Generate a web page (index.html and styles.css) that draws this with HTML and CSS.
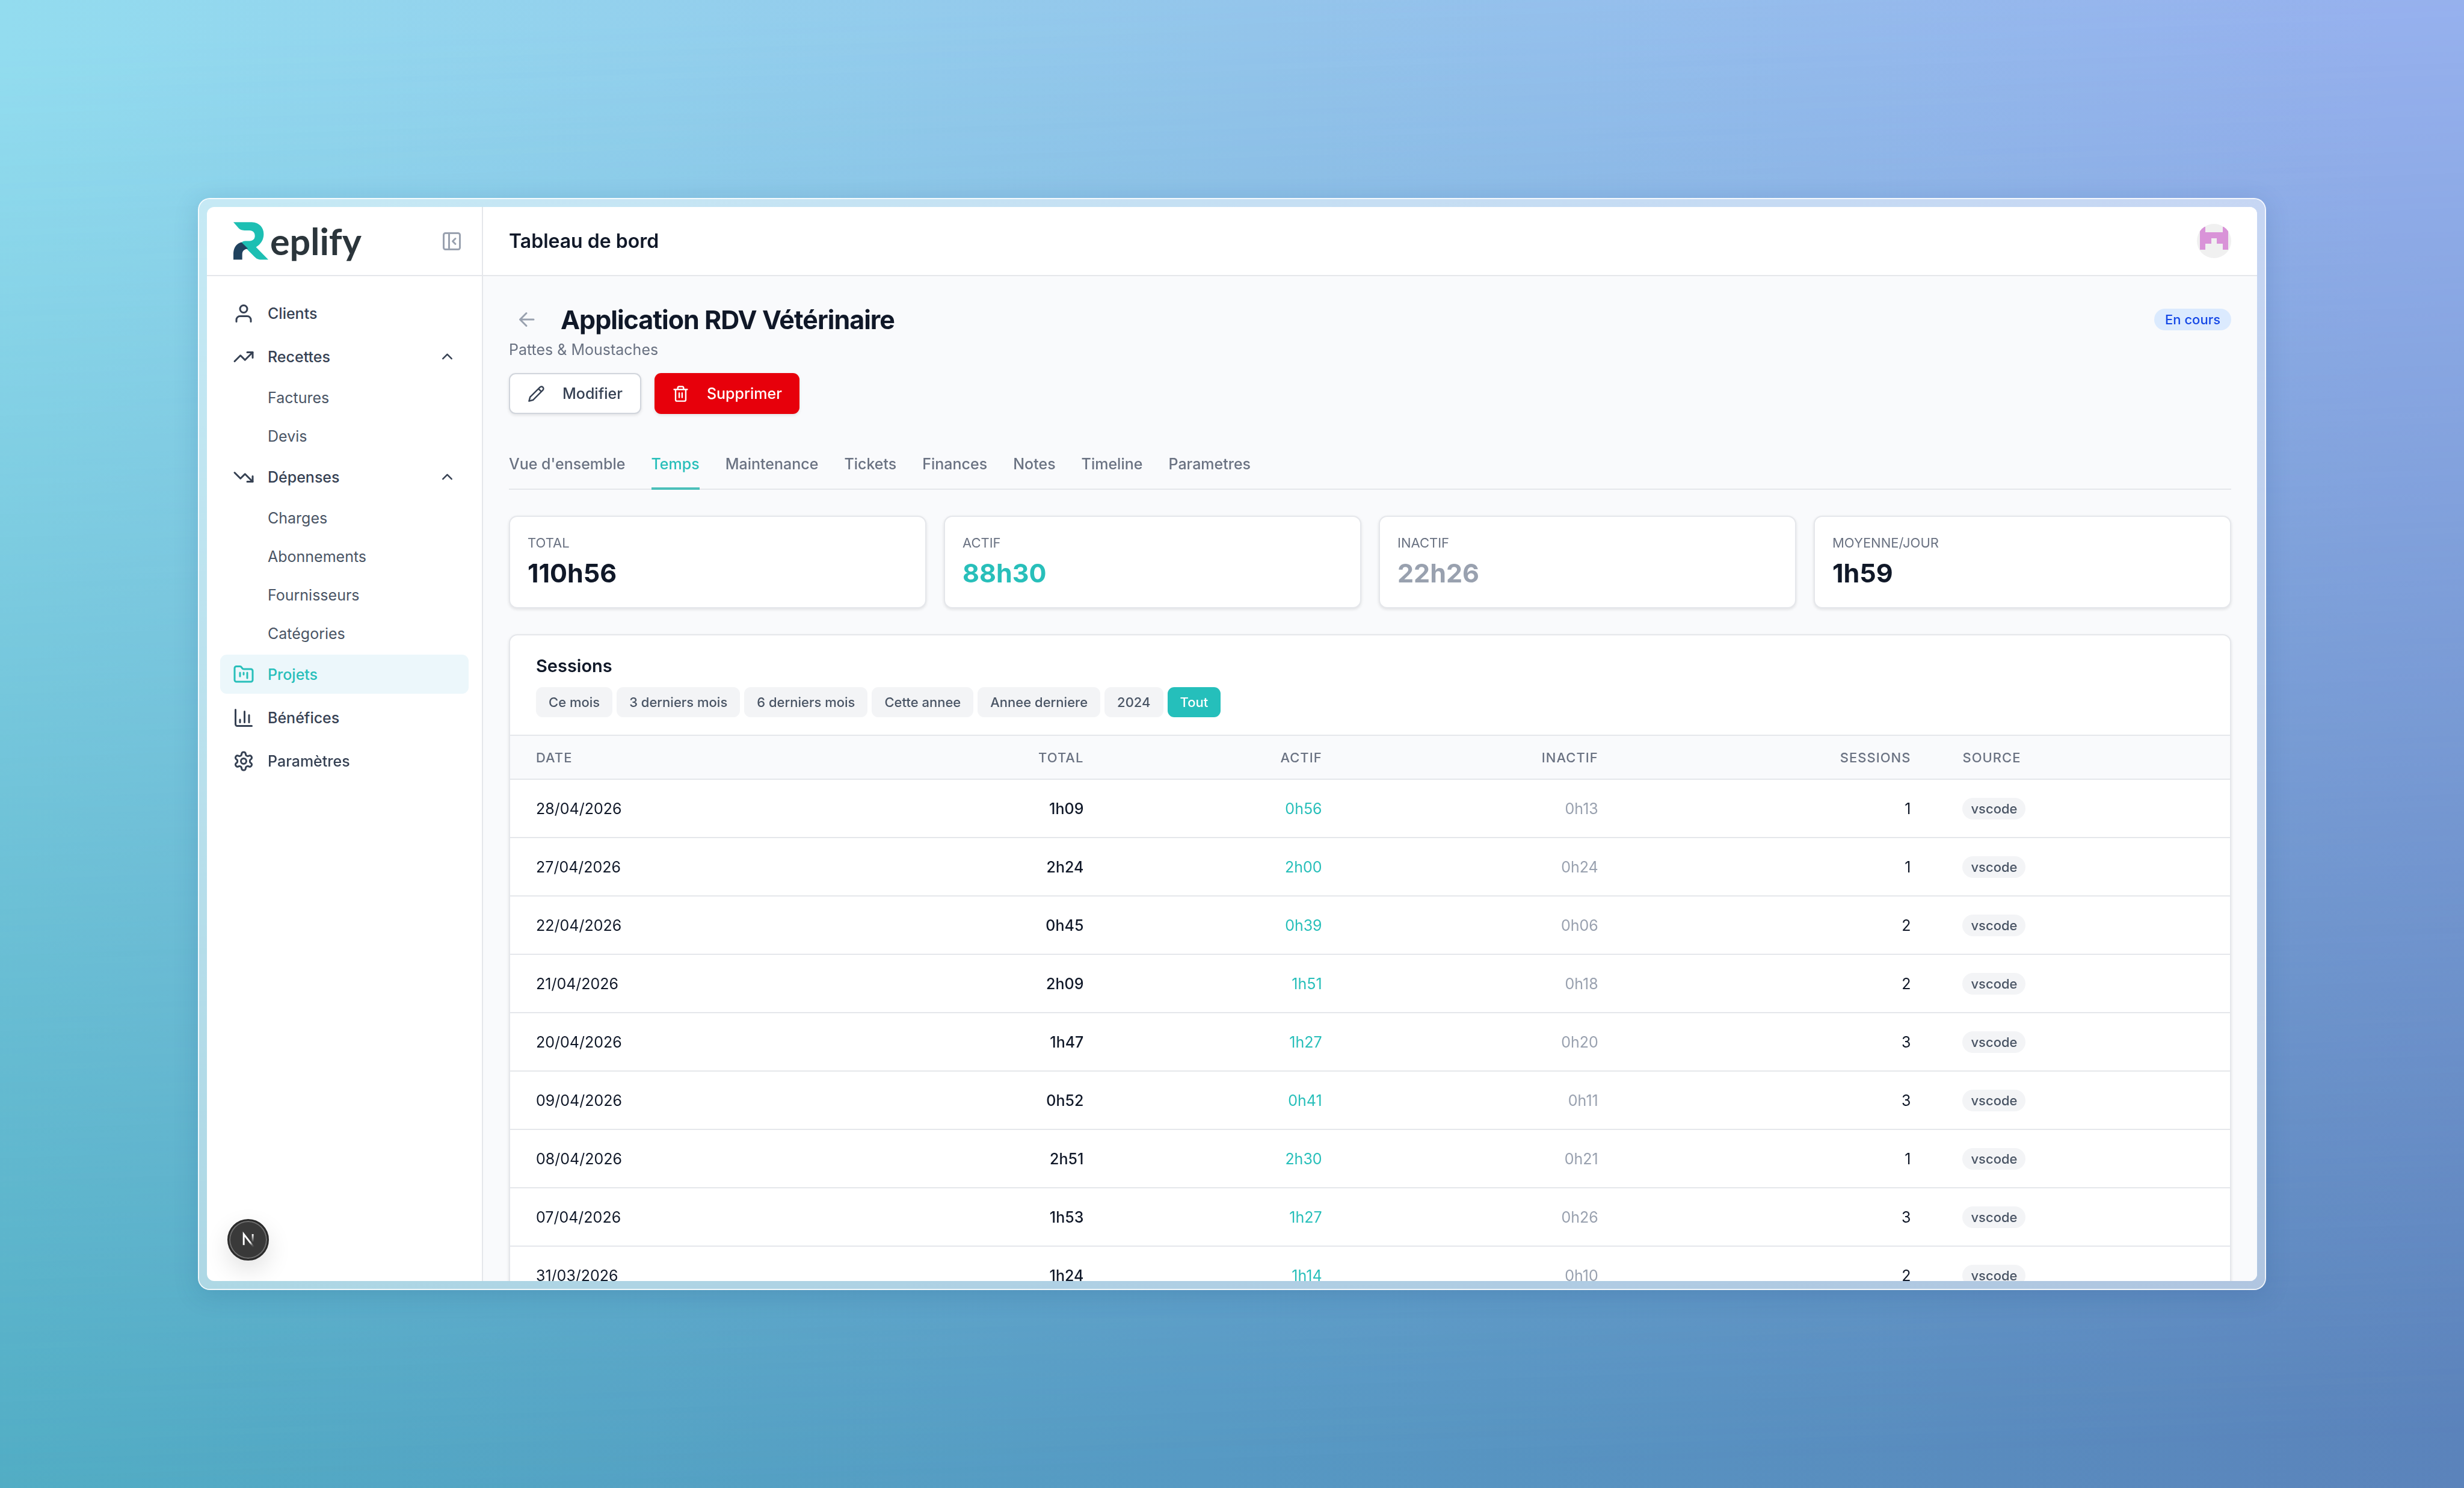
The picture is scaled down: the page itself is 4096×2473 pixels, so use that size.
FILE: index.html
```html
<!DOCTYPE html>
<html lang="fr">
<head>
    <meta charset="UTF-8">
    <meta name="viewport" content="width=device-width, initial-scale=1.0">
    <title>Replify - Application RDV Vétérinaire</title>
    <link rel="stylesheet" href="styles.css">
</head>
<body>

    <div class="frame">
        <div class="app">
            <aside class="sidebar">
                <div class="sidebar-header">
                    <a href="#" class="logo">
                        <svg class="logo-mark" viewBox="0 0 182 196">
                            <path fill="#1dbfb3" d="M0 0H96C136 2 158 28 158 62C158 92 142 116 118 130L182 195H146C128 195 120 190 110 180L40 110C44 102 52 98 62 98H84C102 97 112 87 112 71C112 54 102 44 84 43H58C42 43 34 38 26 30Z"/>
                            <path fill="#20425e" d="M0 195V160C2 130 18 110 42 104L76 138C56 141 46 150 46 168V195Z"/>
                        </svg>
                        <span>eplify</span>
                    </a>
                    <button type="button" class="collapse" aria-label="Réduire le menu">
                        <svg class="icon" viewBox="0 0 24 24"><rect x="3" y="3" width="18" height="18" rx="2"/><path d="M9 3v18M16 15l-3-3 3-3"/></svg>
                    </button>
                </div>
                <nav class="nav">
                    <a href="#" class="nav-item">
                        <svg class="icon" viewBox="0 0 24 24"><path d="M20 21v-2a4 4 0 0 0-4-4H8a4 4 0 0 0-4 4v2"/><circle cx="12" cy="7" r="4"/></svg>
                        <span>Clients</span>
                    </a>
                    <a href="#" class="nav-item">
                        <svg class="icon" viewBox="0 0 24 24"><path d="M22 7l-8.500 8.500-5-5L2 17"/><path d="M16 7h6v6"/></svg>
                        <span>Recettes</span>
                        <svg class="icon chevron" viewBox="0 0 24 24"><path d="M18 15l-6-6-6 6"/></svg>
                    </a>
                    <a href="#" class="nav-sub">Factures</a>
                    <a href="#" class="nav-sub">Devis</a>
                    <a href="#" class="nav-item">
                        <svg class="icon" viewBox="0 0 24 24"><path d="M22 17l-8.500-8.500-5 5L2 7"/><path d="M16 17h6v-6"/></svg>
                        <span>Dépenses</span>
                        <svg class="icon chevron" viewBox="0 0 24 24"><path d="M18 15l-6-6-6 6"/></svg>
                    </a>
                    <a href="#" class="nav-sub">Charges</a>
                    <a href="#" class="nav-sub">Abonnements</a>
                    <a href="#" class="nav-sub">Fournisseurs</a>
                    <a href="#" class="nav-sub">Catégories</a>
                    <a href="#" class="nav-item active">
                        <svg class="icon" viewBox="0 0 24 24"><path d="M4 20h16a2 2 0 0 0 2-2V8a2 2 0 0 0-2-2h-7.930a2 2 0 0 1-1.660-.9l-.82-1.200A2 2 0 0 0 7.930 3H4a2 2 0 0 0-2 2v13c0 1.100.9 2 2 2Z"/><path d="M8 10v4M12 10v2M16 10v6"/></svg>
                        <span>Projets</span>
                    </a>
                    <a href="#" class="nav-item">
                        <svg class="icon" viewBox="0 0 24 24"><path d="M3 3v16a2 2 0 0 0 2 2h16"/><path d="M8 17v-3M13 17V5M18 17V9"/></svg>
                        <span>Bénéfices</span>
                    </a>
                    <a href="#" class="nav-item">
                        <svg class="icon" viewBox="0 0 24 24"><path d="M12.220 2h-.44a2 2 0 0 0-2 2v.18a2 2 0 0 1-1 1.730l-.43.25a2 2 0 0 1-2 0l-.15-.08a2 2 0 0 0-2.730.73l-.22.38a2 2 0 0 0 .73 2.730l.15.1a2 2 0 0 1 1 1.720v.51a2 2 0 0 1-1 1.740l-.15.09a2 2 0 0 0-.73 2.730l.22.38a2 2 0 0 0 2.730.73l.15-.08a2 2 0 0 1 2 0l.43.25a2 2 0 0 1 1 1.730V20a2 2 0 0 0 2 2h.44a2 2 0 0 0 2-2v-.18a2 2 0 0 1 1-1.730l.43-.25a2 2 0 0 1 2 0l.15.08a2 2 0 0 0 2.730-.73l.22-.39a2 2 0 0 0-.73-2.730l-.15-.08a2 2 0 0 1-1-1.740v-.5a2 2 0 0 1 1-1.740l.15-.09a2 2 0 0 0 .73-2.730l-.22-.38a2 2 0 0 0-2.730-.73l-.15.08a2 2 0 0 1-2 0l-.43-.25a2 2 0 0 1-1-1.730V4a2 2 0 0 0-2-2z"/><circle cx="12" cy="12" r="3"/></svg>
                        <span>Paramètres</span>
                    </a>
                </nav>
            </aside>

            <div class="main">
                <header class="topbar">
                    <h2>Tableau de bord</h2>
                    <button type="button" class="avatar" aria-label="Mon compte">
                        <svg viewBox="0 0 12 12" shape-rendering="crispEdges"><path fill="#d993d8" d="M1 1h2v2h6V1h2v8H9V7H7V5H5v2H3v2H1z"/></svg>
                    </button>
                </header>

                <main class="content">
                    <div class="title-row">
                        <a href="#" class="back" aria-label="Retour">
                            <svg class="icon" viewBox="0 0 24 24"><path d="M20 12H5M12 19l-7-7 7-7"/></svg>
                        </a>
                        <h1>Application RDV Vétérinaire</h1>
                        <span class="status">En cours</span>
                    </div>
                    <p class="client">Pattes &amp; Moustaches</p>
                    <div class="actions">
                        <button type="button" class="btn">
                            <svg class="icon" viewBox="0 0 24 24"><path d="M17 3a2.830 2.830 0 1 1 4 4L7.500 20.500 2 22l1.500-5.500zM15 5l4 4"/></svg>
                            Modifier
                        </button>
                        <button type="button" class="btn btn-danger">
                            <svg class="icon" viewBox="0 0 24 24"><path d="M3 6h18M19 6v14a2 2 0 0 1-2 2H7a2 2 0 0 1-2-2V6M8 6V4a2 2 0 0 1 2-2h4a2 2 0 0 1 2 2v2M10 11v6M14 11v6"/></svg>
                            Supprimer
                        </button>
                    </div>

                    <nav class="tabs">
                        <a href="#">Vue d'ensemble</a>
                        <a href="#" class="active">Temps</a>
                        <a href="#">Maintenance</a>
                        <a href="#">Tickets</a>
                        <a href="#">Finances</a>
                        <a href="#">Notes</a>
                        <a href="#">Timeline</a>
                        <a href="#">Parametres</a>
                    </nav>

                    <section class="stats">
                        <div class="card stat"><p>TOTAL</p><strong>110h56</strong></div>
                        <div class="card stat"><p>ACTIF</p><strong class="teal">88h30</strong></div>
                        <div class="card stat"><p>INACTIF</p><strong class="muted">22h26</strong></div>
                        <div class="card stat"><p>MOYENNE/JOUR</p><strong>1h59</strong></div>
                    </section>

                    <section class="card sessions">
                        <div class="sessions-header">
                            <h3>Sessions</h3>
                            <div class="filters">
                                <button type="button">Ce mois</button>
                                <button type="button">3 derniers mois</button>
                                <button type="button">6 derniers mois</button>
                                <button type="button">Cette annee</button>
                                <button type="button">Annee derniere</button>
                                <button type="button">2024</button>
                                <button type="button" class="active">Tout</button>
                            </div>
                        </div>
                        <table>
                            <thead>
                                <tr><th class="left">DATE</th><th>TOTAL</th><th>ACTIF</th><th>INACTIF</th><th>SESSIONS</th><th class="left">SOURCE</th></tr>
                            </thead>
                            <tbody>
                                <tr><td class="left">28/04/2026</td><td class="total">1h09</td><td class="teal">0h56</td><td class="muted">0h13</td><td>1</td><td class="left"><span class="tag">vscode</span></td></tr>
                                <tr><td class="left">27/04/2026</td><td class="total">2h24</td><td class="teal">2h00</td><td class="muted">0h24</td><td>1</td><td class="left"><span class="tag">vscode</span></td></tr>
                                <tr><td class="left">22/04/2026</td><td class="total">0h45</td><td class="teal">0h39</td><td class="muted">0h06</td><td>2</td><td class="left"><span class="tag">vscode</span></td></tr>
                                <tr><td class="left">21/04/2026</td><td class="total">2h09</td><td class="teal">1h51</td><td class="muted">0h18</td><td>2</td><td class="left"><span class="tag">vscode</span></td></tr>
                                <tr><td class="left">20/04/2026</td><td class="total">1h47</td><td class="teal">1h27</td><td class="muted">0h20</td><td>3</td><td class="left"><span class="tag">vscode</span></td></tr>
                                <tr><td class="left">09/04/2026</td><td class="total">0h52</td><td class="teal">0h41</td><td class="muted">0h11</td><td>3</td><td class="left"><span class="tag">vscode</span></td></tr>
                                <tr><td class="left">08/04/2026</td><td class="total">2h51</td><td class="teal">2h30</td><td class="muted">0h21</td><td>1</td><td class="left"><span class="tag">vscode</span></td></tr>
                                <tr><td class="left">07/04/2026</td><td class="total">1h53</td><td class="teal">1h27</td><td class="muted">0h26</td><td>3</td><td class="left"><span class="tag">vscode</span></td></tr>
                                <tr><td class="left">31/03/2026</td><td class="total">1h24</td><td class="teal">1h14</td><td class="muted">0h10</td><td>2</td><td class="left"><span class="tag">vscode</span></td></tr>
                            </tbody>
                        </table>
                    </section>
                </main>
            </div>

            <button type="button" class="dev-badge" aria-label="Outils de développement">
                <svg viewBox="0 0 40 40" fill="none" stroke-width="1.860">
                    <defs>
                        <linearGradient id="n1" gradientUnits="userSpaceOnUse" x1="9.770" y1="8.880" x2="13.400" y2="14.500"><stop stop-color="#fff"/><stop offset="0.600" stop-color="#fff" stop-opacity="0.200"/><stop offset="1" stop-color="#fff" stop-opacity="0"/></linearGradient>
                        <linearGradient id="n2" gradientUnits="userSpaceOnUse" x1="11.820" y1="1.500" x2="11.800" y2="9.620"><stop stop-color="#fff"/><stop offset="1" stop-color="#fff" stop-opacity="0"/></linearGradient>
                    </defs>
                    <g transform="translate(13 13)">
                        <path stroke="url(#n1)" d="M13.300 15.200L2.340 1v11.600"/>
                        <path stroke="url(#n2)" d="M11.830 1v12.100"/>
                    </g>
                </svg>
            </button>
        </div>
    </div>

</body>
</html>
```
FILE: styles.css
```css
* {
    box-sizing: border-box;
}
body {
    margin: 0;
    height: 100vh;
    padding: 329px;
    overflow: hidden;
    font-family: Inter, "Liberation Sans", sans-serif;
    font-size: 25px;
    line-height: 36px;
    color: #101828;
    background: linear-gradient(92deg, #50adc4 0%, #5699c3 50%, #5b83bb 100%);
}
/* lighter gradient that fades out towards the bottom */
body::before {
    content: "";
    position: fixed;
    inset: 0;
    z-index: -1;
    background: linear-gradient(92deg, #93dcef 0%, #94c5eb 50%, #98b2ef 95%);
    -webkit-mask-image: linear-gradient(178deg, #000 3%, transparent 97%);
    mask-image: linear-gradient(178deg, #000 3%, transparent 97%);
}
h1,
h2,
h3,
p {
    margin: 0;
}
a {
    color: inherit;
    text-decoration: none;
}
button {
    font: inherit;
    color: inherit;
    padding: 0;
    border: 0;
    background: none;
    cursor: pointer;
}
.icon {
    width: 36px;
    height: 36px;
    flex: none;
    fill: none;
    stroke: currentColor;
    stroke-width: 2;
    stroke-linecap: round;
    stroke-linejoin: round;
}
.frame {
    height: 100%;
    padding: 13px;
    border: 2px solid rgba(255, 255, 255, 0.9);
    border-radius: 20px;
    background-color: rgba(255, 255, 255, 0.5);
    background-clip: padding-box;
    box-shadow: 0 8px 40px rgba(30, 70, 130, 0.18);
}
.app {
    position: relative;
    display: flex;
    height: 100%;
    overflow: hidden;
    border-radius: 12px;
    background-color: #fff;
}

/* Sidebar */
.sidebar {
    flex: none;
    width: 459px;
    border-right: 2px solid #e5e7eb;
}
.sidebar-header {
    display: flex;
    align-items: center;
    justify-content: space-between;
    height: 115px;
    padding: 0 32px 0 44px;
    border-bottom: 2px solid #e5e7eb;
}
.logo {
    display: flex;
    align-items: center;
    gap: 3px;
    font-family: Lato, sans-serif;
    font-size: 61px;
    font-weight: 700;
    line-height: 72px;
    font-variant-ligatures: none;
    color: #2b353b;
}
.logo-mark {
    width: 58px;
    height: 63px;
}
.collapse {
    display: flex;
    color: #99a1af;
}
.nav {
    display: flex;
    flex-direction: column;
    gap: 7px;
    padding: 29px 22px;
    color: #364153;
}
.nav-item {
    display: flex;
    align-items: center;
    gap: 22px;
    height: 65px;
    padding: 0 21px;
    border-radius: 11px;
    font-weight: 500;
}
.nav-item.active {
    background-color: #ecf7fb;
    color: #28bfba;
}
.chevron {
    width: 29px;
    height: 29px;
    margin-left: auto;
}
.nav-sub {
    height: 57px;
    padding: 11px 21px 10px 79px;
    color: #4a5565;
}

/* Main column */
.main {
    flex: 1;
    min-width: 0;
    background-color: #f9fafc;
}
.topbar {
    display: flex;
    align-items: center;
    justify-content: space-between;
    height: 115px;
    padding: 0 43px;
    border-bottom: 2px solid #e5e7eb;
    background-color: #fff;
}
.topbar h2 {
    font-size: 32px;
    font-weight: 600;
}
.avatar {
    width: 57px;
    height: 57px;
    overflow: hidden;
    border-radius: 50%;
    background-color: #f0f0f0;
}
.avatar svg {
    display: block;
}
.content {
    padding: 43px;
}
.title-row {
    display: flex;
    align-items: center;
    gap: 29px;
    height: 57px;
}
.title-row h1 {
    font-size: 43px;
    font-weight: 700;
    letter-spacing: -1px;
}
.back {
    display: flex;
    justify-content: center;
    width: 57px;
    color: #99a1af;
}
.status {
    margin-left: auto;
    padding: 0 18px;
    border-radius: 18px;
    font-size: 22px;
    font-weight: 500;
    color: #1447e6;
    background-color: #dbeafe;
}
.client {
    margin: 4px 0 21px;
    color: #6a7282;
}
.actions {
    display: flex;
    gap: 22px;
}
.btn {
    display: flex;
    align-items: center;
    gap: 29px;
    height: 68px;
    padding: 0 29px;
    border: 2px solid #d1d5dc;
    border-radius: 11px;
    font-weight: 500;
    color: #364153;
    background-color: #fff;
    box-shadow: 0 2px 5px rgba(0, 0, 0, 0.1);
}
.btn .icon {
    width: 29px;
    height: 29px;
}
.btn-danger {
    border: 0;
    color: #fff;
    background-color: #e7000b;
}
.tabs {
    display: flex;
    gap: 43px;
    margin: 43px 0;
    box-shadow: inset 0 -2px #e5e7eb;
    font-weight: 500;
    color: #6a7282;
}
.tabs a {
    padding: 22px 0 21px;
    border-bottom: 4px solid transparent;
}
.tabs .active {
    border-color: #4bbfba;
    color: #28bfba;
}
.card {
    border: 2px solid #e5e7eb;
    border-radius: 14px;
    background-color: #fff;
    box-shadow: 0 2px 5px rgba(0, 0, 0, 0.1);
}
.stats {
    display: grid;
    grid-template-columns: repeat(4, 1fr);
    gap: 29px;
    margin-bottom: 43px;
}
.stat {
    padding: 29px 29px 28px;
}
.stat p {
    margin-bottom: 7px;
    font-size: 22px;
    line-height: 29px;
    color: #6a7282;
}
.stat strong {
    display: block;
    font-size: 43px;
    line-height: 57px;
}
.teal {
    color: #28bfba;
}
.muted {
    color: #99a1af;
}

/* Sessions table */
.sessions {
    overflow: hidden;
}
.sessions-header {
    padding: 29px 43px;
    border-bottom: 2px solid #e5e7eb;
}
.sessions h3 {
    margin-bottom: 14px;
    font-size: 29px;
    font-weight: 600;
    line-height: 43px;
}
.filters {
    display: flex;
    gap: 7px;
}
.filters button {
    height: 50px;
    padding: 0 21px;
    border-radius: 11px;
    font-size: 22px;
    font-weight: 500;
    color: #4a5565;
    background-color: #f3f4f6;
}
.filters .active {
    color: #fff;
    background-color: #25bfbb;
}
table {
    width: 100%;
    border-spacing: 0;
    text-align: right;
}
th {
    height: 73px;
    padding: 0 43px;
    border-bottom: 2px solid #e5e7eb;
    font-size: 22px;
    font-weight: 500;
    letter-spacing: 1px;
    color: #6a7282;
    background-color: #f9fafc;
}
td {
    height: 97px;
    padding: 0 43px;
    border-bottom: 2px solid #e5e7eb;
}
.left {
    text-align: left;
}
.total {
    font-weight: 500;
}
.tag {
    display: inline-block;
    padding: 0 14px;
    border-radius: 18px;
    font-size: 22px;
    font-weight: 500;
    color: #4a5565;
    background-color: #f3f4f6;
}

/* Next.js dev indicator, floats over the sidebar */
.dev-badge {
    position: absolute;
    left: 34px;
    bottom: 34px;
    width: 69px;
    height: 69px;
    border: 3px solid #2b2b2b;
    border-radius: 50%;
    background-color: #393939;
    box-shadow: inset 0 0 0 2px #6e6e6e, 0 16px 40px rgba(0, 0, 0, 0.12);
}
.dev-badge svg {
    display: block;
}
```
